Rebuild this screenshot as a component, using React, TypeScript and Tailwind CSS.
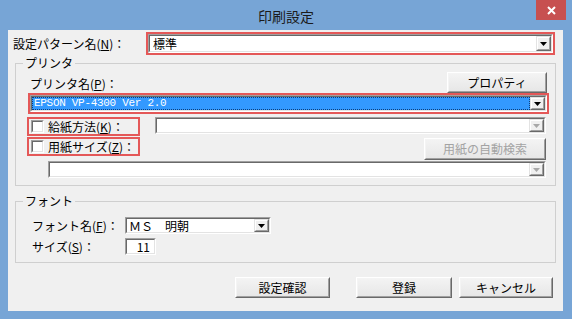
import React from "react";

type P = { className?: string; inner?: string; children?: React.ReactNode };

const Sunken = ({ className = "", inner = "", children }: P) => (
  <div className={"border border-t-[#a0a0a0] border-l-[#a0a0a0] border-r-white border-b-white " + className}>
    <div className={"h-full w-full border border-t-[#696969] border-l-[#696969] border-r-[#e3e3e3] border-b-[#e3e3e3] " + inner}>
      {children}
    </div>
  </div>
);

const Arrow = ({ disabled = false }: { disabled?: boolean }) => (
  <div className="h-full w-[15px] shrink-0 border border-t-[#e3e3e3] border-l-[#e3e3e3] border-r-[#696969] border-b-[#696969]">
    <div className="flex h-full w-full items-center justify-center border border-t-white border-l-white border-r-[#a0a0a0] border-b-[#a0a0a0] bg-[#f0f0f0]">
      <svg width="7" height="4" viewBox="0 0 7 4">
        <path d="M0 0H7L3.5 4Z" fill={disabled ? "#a8a8a8" : "#000"} />
      </svg>
    </div>
  </div>
);

const Combo = ({ className = "", disabled = false, children }: P & { disabled?: boolean }) => (
  <Sunken className={className} inner="flex bg-white">
    <div className="flex min-w-0 flex-1 items-center">{children}</div>
    <Arrow disabled={disabled} />
  </Sunken>
);

const Btn = ({ className = "", disabled = false, children }: P & { disabled?: boolean }) => (
  <div className={"border border-t-white border-l-white border-r-[#696969] border-b-[#696969] " + className}>
    <div
      className={
        "flex h-full w-full items-center justify-center border border-t-[#f4f4f4] border-l-[#f4f4f4] border-r-[#a0a0a0] border-b-[#a0a0a0] bg-gradient-to-b from-[#f3f3f3] to-[#e7e7e7] " +
        (disabled ? "text-[#a3a3a3]" : "text-black")
      }
    >
      {children}
    </div>
  </div>
);

const Check = () => <Sunken className="h-[13px] w-[13px] shrink-0" inner="bg-white" />;

export default function App() {
  return (
    <div className="flex h-[319px] w-[572px] flex-col bg-[#77a5d6] font-['Noto_Sans_CJK_JP','Noto_Sans',sans-serif] text-[12px] leading-none text-black">
      {/* title bar */}
      <div className="relative flex h-[30px] items-center justify-center pt-[2px] text-[14px] text-[#1b1b1b]">
        印刷設定
        <div className="absolute right-[6px] top-0 flex h-[20px] w-[30px] items-center justify-center bg-[#c75050]">
          <svg width="9" height="9" viewBox="0 0 9 9">
            <path d="M1 1L8 8M8 1L1 8" stroke="#fff" strokeWidth="2" />
          </svg>
        </div>
      </div>

      {/* client */}
      <div className="ml-[8px] flex h-[281px] w-[555px] flex-col bg-[#f0f0f0]">
        {/* pattern */}
        <div className="mt-[2px] flex h-[23px] items-center">
          <span className="ml-[5px]">
            設定パターン名(<span className="underline">N</span>)：
          </span>
          <div className="ml-auto mr-[8px] h-[23px] w-[409px] border-2 border-[#e45858]">
            <Combo className="h-full w-full">
              <span className="pl-[3px]">標準</span>
            </Combo>
          </div>
        </div>

        {/* printer group */}
        <fieldset className="mx-[7px] border border-[#cfcfcf] pb-[7px]">
          <legend className="ml-[7px] px-[2px] leading-[16px]">プリンタ</legend>
          <div className="flex h-[22px] items-end">
            <span className="mb-[1px] ml-[14px] leading-[16px]">
              プリンタ名(<span className="underline">P</span>)：
            </span>
            <Btn className="ml-auto mr-[8px] h-[21px] w-[100px]">プロパティ</Btn>
          </div>
          <div className="ml-[12px] mr-[6px] h-[21px] border-2 border-[#e45858]">
            <Combo className="h-full w-full">
              <div className="flex h-full w-full items-center border border-dotted border-[#0d3f7a] bg-[#3399ff] pl-[1px] font-['Liberation_Mono',monospace] text-[11px] tracking-[-0.3px] text-white">
                EPSON VP-4300 Ver 2.0
              </div>
            </Combo>
          </div>

          <div className="mt-[3px] flex items-start">
            <div className="ml-[11px] flex h-[19px] w-[113px] items-center border-2 border-[#e45858]">
              <span className="ml-[2px]">
                <Check />
              </span>
              <span className="ml-[4px]">
                給紙方法(<span className="underline">K</span>)：
              </span>
            </div>
            <Combo className="ml-auto mr-[9px] h-[17px] w-[391px]" disabled />
          </div>

          <div className="mt-px flex items-start">
            <div className="ml-[11px] flex h-[19px] w-[113px] items-center border-2 border-[#e45858]">
              <span className="ml-[2px]">
                <Check />
              </span>
              <span className="ml-[4px]">
                用紙サイズ(<span className="underline">Z</span>)：
              </span>
            </div>
            <Btn className="ml-auto mr-[9px] mt-px h-[22px] w-[122px]" disabled>
              用紙の自動検索
            </Btn>
          </div>
          <Combo className="ml-[32px] mr-[9px] mt-px h-[17px]" disabled />
        </fieldset>

        {/* font group */}
        <fieldset className="mx-[7px] mt-[7px] border border-[#cfcfcf] pb-[7px]">
          <legend className="ml-[7px] px-[2px] leading-[16px]">フォント</legend>
          <div className="mt-[8px] flex h-[17px] items-center">
            <span className="ml-[16px] w-[93px]">
              フォント名(<span className="underline">F</span>)：
            </span>
            <Combo className="h-full w-[146px]">
              <span className="pl-[2px]">ＭＳ　明朝</span>
            </Combo>
          </div>
          <div className="mt-[4px] flex h-[17px] items-center">
            <span className="ml-[16px] w-[93px]">
              サイズ(<span className="underline">S</span>)：
            </span>
            <Sunken className="h-full w-[31px]" inner="flex items-center justify-end bg-white pr-[4px]">
              11
            </Sunken>
          </div>
        </fieldset>

        {/* buttons */}
        <div className="mt-[14px] flex h-[21px] justify-end pr-[10px]">
          <Btn className="h-full w-[95px]">設定確認</Btn>
          <Btn className="ml-[26px] h-full w-[96px]">登録</Btn>
          <Btn className="ml-[7px] h-full w-[94px]">キャンセル</Btn>
        </div>
      </div>
    </div>
  );
}
